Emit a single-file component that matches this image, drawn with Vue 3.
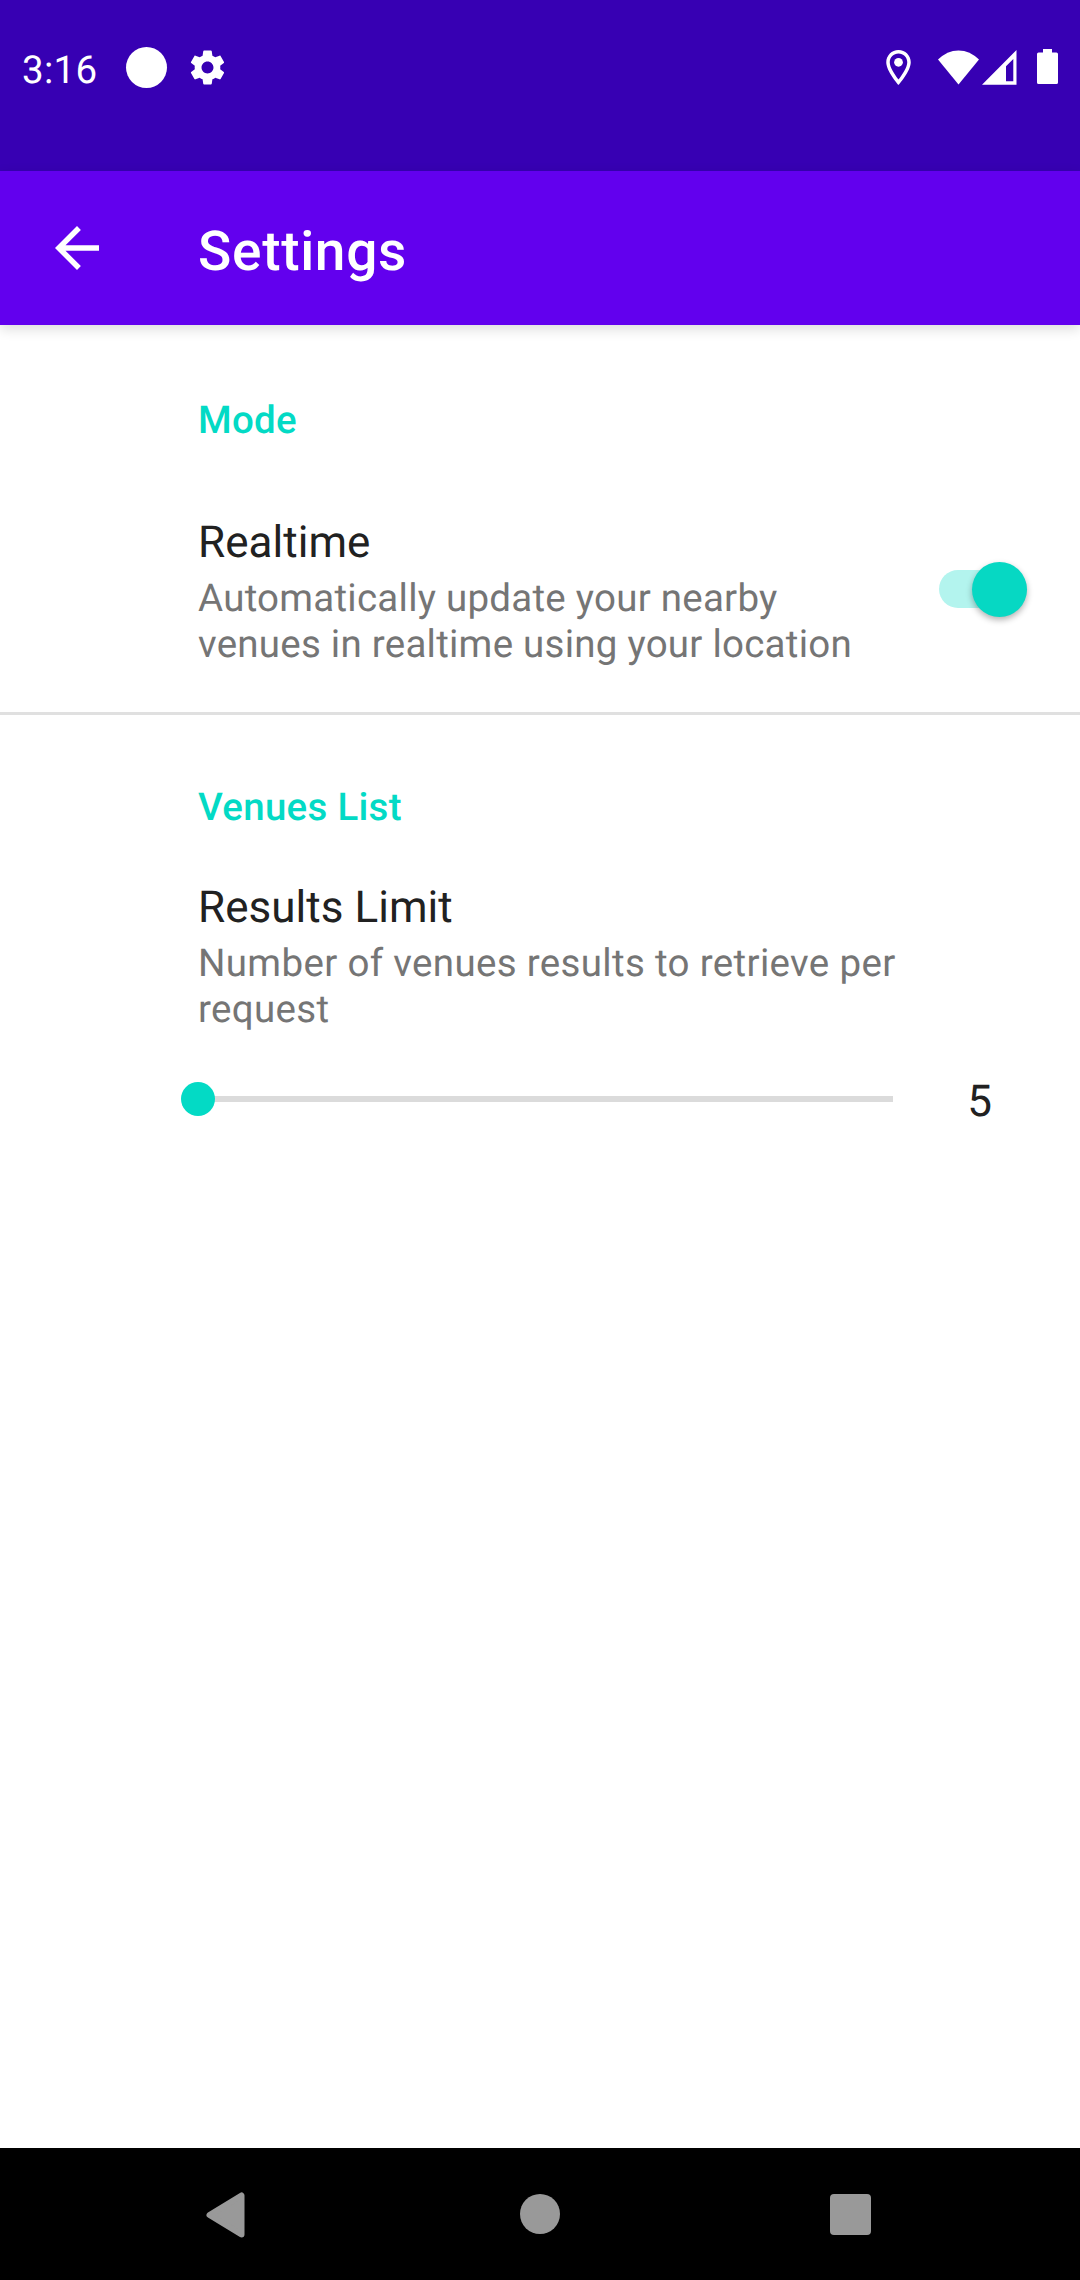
<script setup>
import { ref } from 'vue'

const realtime = ref(true)
const limit = ref(5)
</script>

<template>
  <div class="screen">
    <header class="status-bar">
      <div class="status-left">
        <span class="clock">3:16</span>
        <span class="dot"></span>
        <svg class="gear" viewBox="0 0 24 24" width="41" height="41">
          <path
            d="M19.43 12.98c.04-.32.07-.64.07-.98s-.03-.66-.07-.98l2.11-1.65c.19-.15.24-.42.12-.64l-2-3.46c-.12-.22-.39-.3-.61-.22l-2.49 1c-.52-.4-1.08-.73-1.69-.98l-.38-2.65C14.46 2.18 14.25 2 14 2h-4c-.25 0-.46.18-.49.42l-.38 2.65c-.61.25-1.17.59-1.69.98l-2.49-1c-.23-.09-.49 0-.61.22l-2 3.46c-.13.22-.07.49.12.64l2.11 1.65c-.04.32-.07.65-.07.98s.03.66.07.98l-2.11 1.65c-.19.15-.24.42-.12.64l2 3.46c.12.22.39.3.61.22l2.49-1c.52.4 1.08.73 1.69.98l.38 2.65c.03.24.24.42.49.42h4c.25 0 .46-.18.49-.42l.38-2.65c.61-.25 1.17-.59 1.69-.98l2.49 1c.23.09.49 0 .61-.22l2-3.46c.12-.22.07-.49-.12-.64l-2.11-1.65zM12 15.5c-1.93 0-3.5-1.57-3.5-3.5s1.57-3.5 3.5-3.5 3.5 1.57 3.5 3.5-1.57 3.5-3.5 3.5z"
          />
        </svg>
      </div>
      <div class="status-right">
        <svg class="pin" viewBox="5 2 14 20" width="25" height="35">
          <path
            d="M12 2C8.13 2 5 5.13 5 9c0 5.25 7 13 7 13s7-7.75 7-13c0-3.87-3.13-7-7-7zM7 9c0-2.76 2.24-5 5-5s5 2.24 5 5c0 2.88-2.88 7.19-5 9.88C9.92 16.21 7 11.85 7 9z"
          />
          <circle cx="12" cy="9" r="2.5" />
        </svg>
        <svg class="wifi" viewBox="0 0 41 35" width="41" height="35">
          <path d="M0 9.6Q9 .4 20.5 .4T41 9.6L20.5 34.6Z" />
        </svg>
        <svg class="signal" viewBox="0 0 35 35" width="35" height="35">
          <path fill-rule="evenodd" d="M34.5 0V34.7H0ZM31.3 9L24 16.2V31.3H31.3Z" />
        </svg>
        <svg class="battery" viewBox="0 0 21 35" width="21" height="35">
          <path d="M6 0H15V3.5H19.4Q21 3.5 21 5.1V33.4Q21 35 19.4 35H1.6Q0 35 0 33.4V5.1Q0 3.5 1.6 3.5H6Z" />
        </svg>
      </div>
    </header>

    <div class="toolbar">
      <svg class="back" viewBox="0 0 24 24" width="66" height="66">
        <path d="M20 11H7.83l5.59-5.59L12 4l-8 8 8 8 1.41-1.41L7.83 13H20v-2z" />
      </svg>
      <h1>Settings</h1>
    </div>

    <main>
      <section class="mode">
        <h2>Mode</h2>
        <div class="row">
          <div class="text">
            <div class="title">Realtime</div>
            <div class="summary">Automatically update your nearby<br />venues in realtime using your location</div>
          </div>
          <div class="switch" role="switch" :aria-checked="realtime" @click="realtime = !realtime">
            <span class="thumb"></span>
          </div>
        </div>
      </section>

      <section class="venues">
        <h2>Venues List</h2>
        <div class="title">Results Limit</div>
        <div class="summary">Number of venues results to retrieve per<br />request</div>
        <div class="seek">
          <div class="track">
            <span class="handle"></span>
          </div>
          <span class="value">{{ limit }}</span>
        </div>
      </section>
    </main>

    <nav>
      <svg class="nav-back" viewBox="0 0 39 46" width="39" height="46">
        <path
          d="M3.5 23L35.5 3.5V42.5Z"
          fill="#999"
          stroke="#999"
          stroke-width="6"
          stroke-linejoin="round"
        />
      </svg>
      <span class="home"></span>
      <span class="recent"></span>
    </nav>
  </div>
</template>

<style>
body {
  margin: 0;
  background: #fff;
}
</style>

<style scoped>
.screen {
  display: flex;
  flex-direction: column;
  width: 1080px;
  height: 2280px;
  overflow: hidden;
  background: #fff;
  font-family: Roboto, sans-serif;
  text-rendering: geometricPrecision;
}
svg {
  display: block;
  flex: none;
  fill: #fff;
}
h1,
h2 {
  margin: 0;
  font-weight: 500;
}
.status-bar {
  box-sizing: border-box;
  display: flex;
  justify-content: space-between;
  height: 171px;
  padding: 46px 22px 0;
  background: #3700b3;
}
.status-left,
.status-right {
  display: flex;
  align-items: flex-start;
}
.clock {
  width: 104px;
  padding-top: 2px;
  color: #fff;
  font-size: 38.5px;
  line-height: 46px;
  letter-spacing: 0.008em;
}
.dot {
  width: 41px;
  height: 41px;
  margin-top: 1px;
  border-radius: 50%;
  background: #fff;
}
.gear {
  margin: 1px 0 0 20px;
}
.status-right {
  padding-top: 4px;
}
.wifi {
  margin-left: 27px;
}
.signal {
  margin-left: 3px;
}
.battery {
  margin: -1px 0 0 20px;
}
.toolbar {
  position: relative;
  display: flex;
  align-items: center;
  height: 154px;
  padding-left: 44px;
  background: #6200ee;
  box-shadow: 0 4px 12px rgba(0, 0, 0, 0.14);
}
.toolbar h1 {
  margin-left: 88px;
  padding-top: 8px;
  color: #fff;
  font-size: 55px;
  line-height: 64px;
  letter-spacing: 0.0125em;
}
main {
  flex: 1;
}
section {
  box-sizing: border-box;
  padding-left: 198px;
}
h2 {
  color: #03dac5;
  font-size: 38.5px;
  line-height: 46px;
  letter-spacing: 0.00714em;
}
.mode {
  height: 390px;
  padding-top: 73px;
  border-bottom: 3px solid #e0e0e0;
}
.row {
  display: flex;
  align-items: flex-start;
  justify-content: space-between;
  margin-top: 72px;
  padding-right: 53px;
}
.title {
  margin-bottom: 8px;
  color: #212121;
  font-size: 44px;
  line-height: 52px;
  letter-spacing: 0.001em;
}
.summary {
  color: #757575;
  font-size: 38.5px;
  line-height: 46px;
  letter-spacing: 0.0064em;
}
.switch {
  display: flex;
  align-items: center;
  justify-content: flex-end;
  width: 88px;
  height: 38px;
  margin-top: 54px;
  border-radius: 19px;
  background: #b3f4ee;
}
.thumb {
  width: 55px;
  height: 55px;
  border-radius: 50%;
  background: #06d8c3;
  box-shadow: 0 3px 6px rgba(0, 0, 0, 0.3);
}
.venues {
  padding-top: 70px;
}
.venues h2 {
  margin-bottom: 50px;
}
.venues .summary {
  letter-spacing: 0.0087em;
}
.seek {
  display: flex;
  align-items: center;
  margin-top: 42px;
  height: 52px;
}
.track {
  display: flex;
  align-items: center;
  width: 695px;
  height: 6px;
  margin-top: -4px;
  background: #dbdbdb;
}
.handle {
  flex: none;
  width: 34px;
  height: 34px;
  margin-left: -17px;
  border-radius: 50%;
  background: #03dac5;
}
.value {
  width: 173px;
  color: #212121;
  font-size: 44px;
  line-height: 52px;
  text-align: center;
}
nav {
  box-sizing: border-box;
  display: flex;
  height: 132px;
  padding: 44px 0 0 206px;
  background: #000;
}
.home {
  width: 40px;
  height: 40px;
  margin: 2px 0 0 275px;
  border-radius: 50%;
  background: #999;
}
.recent {
  width: 41px;
  height: 41px;
  margin: 2px 0 0 270px;
  border-radius: 4px;
  background: #999;
}
</style>
